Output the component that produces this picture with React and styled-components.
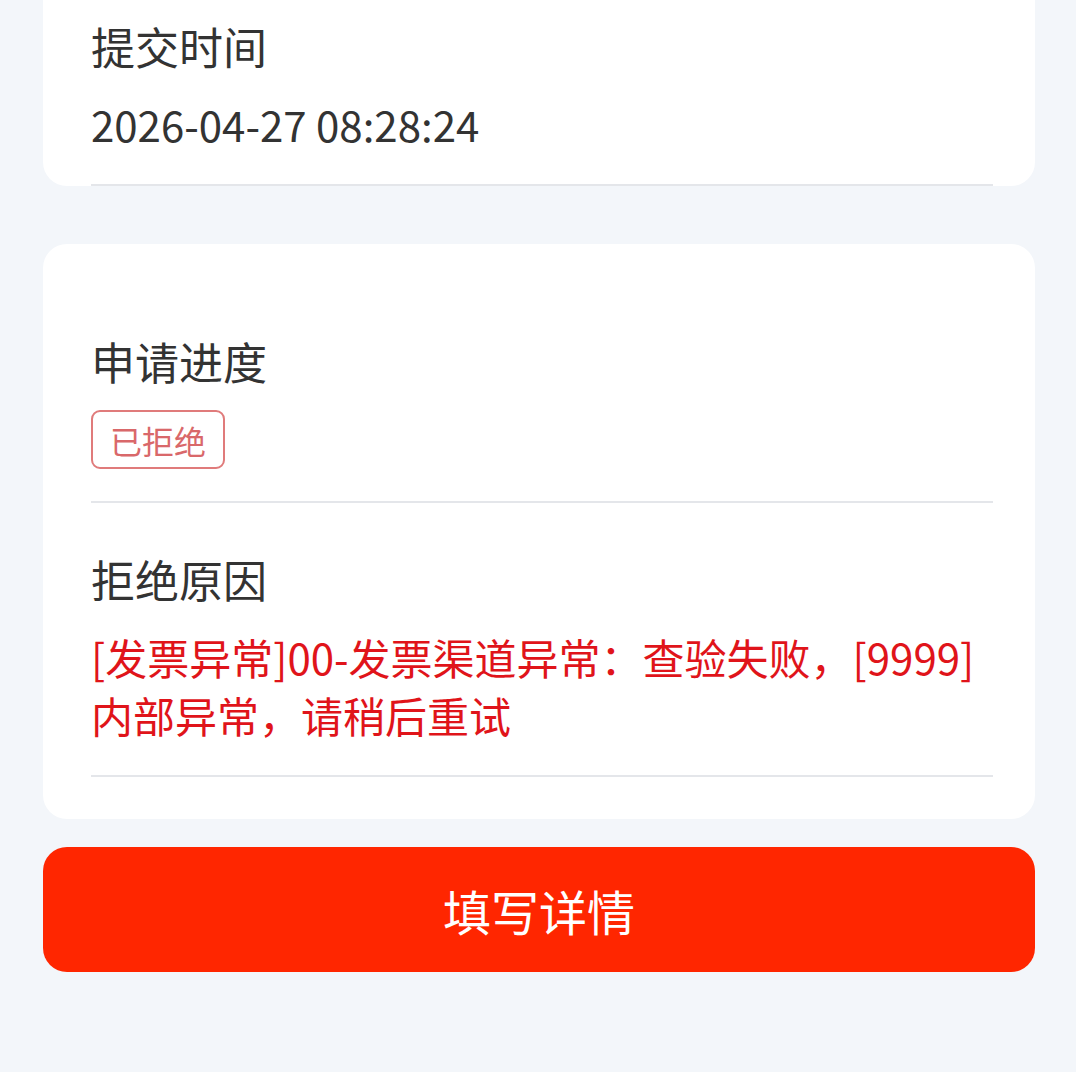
import React from "react";
import styled, { createGlobalStyle } from "styled-components";

const GlobalStyle = createGlobalStyle`
  html, body {
    margin: 0;
    padding: 0;
    background: #f3f6fa;
  }
  body {
    font-family: "Noto Sans CJK SC", "Noto Sans", sans-serif;
    overflow: hidden;
  }
`;

// the list is scrolled a little, so the first card starts above the viewport
const Page = styled.div`
  min-height: 1072px;
  padding: 0 41px 0 43px;
  margin-top: -71px;
  background: #f3f6fa;
`;

const Card = styled.section`
  background: #ffffff;
  border-radius: 24px;
  padding: 40px 42px ${({ $bottom }) => $bottom}px 48px;
  margin-bottom: ${({ $gap }) => $gap}px;
`;

const Row = styled.div`
  padding: 47px 0 31px;
  border-bottom: 2px solid #e4e6ea;
  margin-bottom: -1px;
`;

const Label = styled.div`
  font-size: 44px;
  line-height: 60px;
  color: #333333;
  margin-bottom: 19px;
`;

const Value = styled.div`
  font-size: 42px;
  line-height: 58px;
  color: ${({ $danger }) => ($danger ? "#e0141a" : "#333333")};
  word-break: break-all;
`;

const TagWrap = styled.div`
  height: 60px;
`;

const Tag = styled.span`
  display: inline-flex;
  align-items: center;
  box-sizing: border-box;
  height: 59px;
  padding: 0 17px;
  border: 2px solid #e07b7b;
  border-radius: 9px;
  font-size: 32px;
  color: #d9686a;
`;

const SubmitButton = styled.button`
  display: block;
  width: 100%;
  height: 125px;
  border: none;
  border-radius: 24px;
  background: #ff2600;
  color: #ffffff;
  font-family: "Noto Sans CJK SC", "Noto Sans", sans-serif;
  font-size: 48px;
  cursor: pointer;
`;

export default function App() {
  return (
    <>
      <GlobalStyle />
      <Page>
        <Card $bottom={0} $gap={59}>
          <Row>
            <Label>提交时间</Label>
            <Value>2026-04-27 08:28:24</Value>
          </Row>
        </Card>
        <Card $bottom={43} $gap={28}>
          <Row>
            <Label>申请进度</Label>
            <TagWrap>
              <Tag>已拒绝</Tag>
            </TagWrap>
          </Row>
          <Row>
            <Label>拒绝原因</Label>
            <Value $danger>
              [发票异常]00-发票渠道异常：查验失败，[9999]内部异常，请稍后重试
            </Value>
          </Row>
        </Card>
        <SubmitButton>填写详情</SubmitButton>
      </Page>
    </>
  );
}
